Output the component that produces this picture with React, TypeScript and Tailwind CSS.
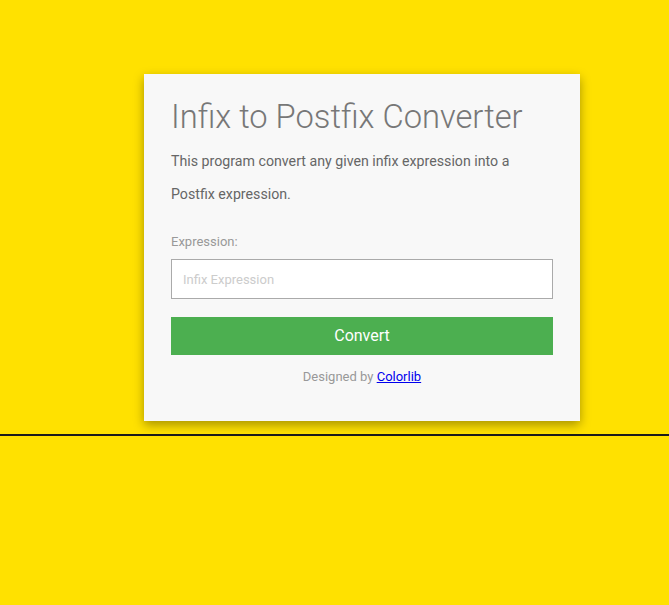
import React from "react";

export default function App() {
  return (
    <div
      className="min-h-[605px] w-full bg-[#ffe100] flex flex-col"
      style={{ fontFamily: "Roboto, 'Liberation Sans', sans-serif" }}
    >
      <div className="ml-[144px] mt-[74px] w-[436px] h-[347px] bg-[#f8f8f8] shadow-[0_4px_10px_rgba(0,0,0,0.35)] px-[27px] pt-[23px]">
        <h1 className="text-[32.7px] font-light text-[#777] leading-[40px]">Infix to Postfix Converter</h1>
        <p className="mt-[8px] w-[360px] text-[14.2px] text-[#666] leading-[33px]">
          This program convert any given infix expression into a Postfix expression.
        </p>
        <div className="mt-[23px] text-[13px] text-[#999] leading-[16px]">Expression:</div>
        <input
          className="mt-[9px] block w-full h-[40px] border border-[#aaa] bg-white px-[11px] text-[13px] outline-none placeholder:text-[#ccc]"
          placeholder="Infix Expression"
        />
        <button className="mt-[18px] block w-full h-[38px] bg-[#4caf50] text-white text-[16px]">
          Convert
        </button>
        <div className="mt-[12px] text-center text-[13px] text-[#999]">
          Designed by <a href="#" className="text-[#00e] underline">Colorlib</a>
        </div>
      </div>
      <div className="mt-[13px] h-[2px] w-full bg-[#1a1a1a]" />
    </div>
  );
}
